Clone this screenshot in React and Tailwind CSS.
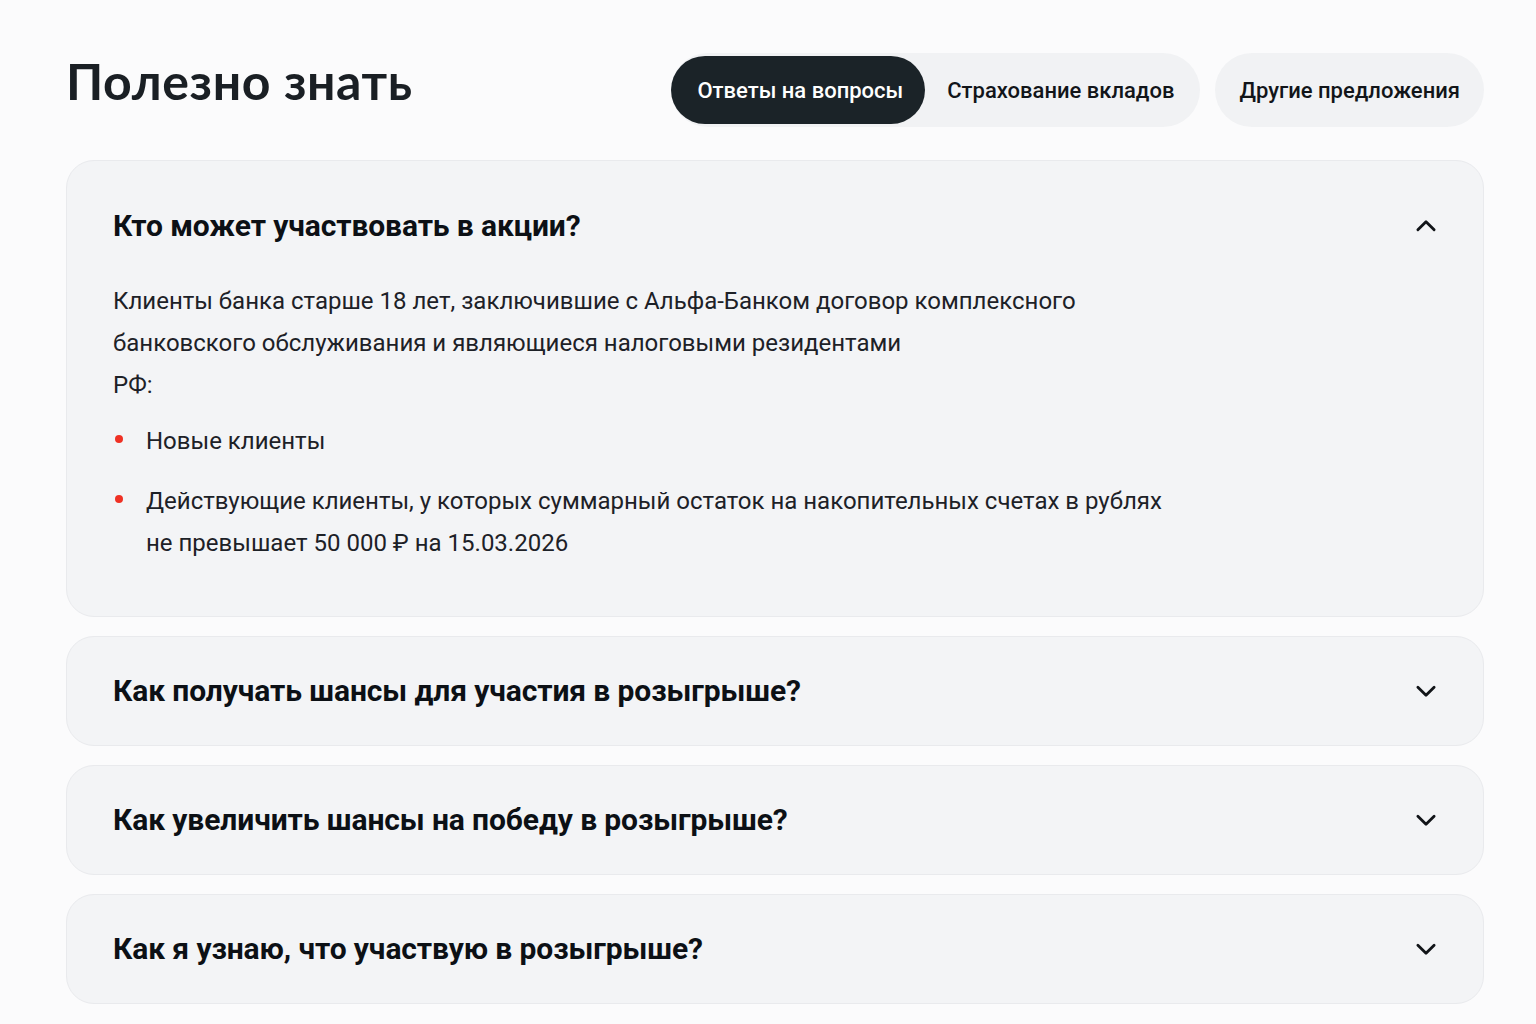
import React from "react";

const Chevron = ({ up }) => (
  <svg width="26" height="26" viewBox="0 0 24 24" fill="none" stroke="#111418" strokeWidth="2.6" strokeLinecap="round" strokeLinejoin="round">
    {up ? <path d="M4.5 15.5 12 8l7.5 7.5" /> : <path d="M4.5 8.5 12 16l7.5-7.5" />}
  </svg>
);

const Q = ({ children }) => (
  <div className="text-[30px] leading-[36px] font-bold text-[#0c1015] tracking-[-0.1px]">{children}</div>
);

const Collapsed = ({ title }) => (
  <div className="rounded-[28px] bg-[#f3f4f6] border border-[#e9eaed] pl-[46px] pr-[44px] h-[110px] flex items-center justify-between">
    <Q>{title}</Q>
    <Chevron />
  </div>
);

export default function App() {
  return (
    <div className="min-h-[1024px] bg-[#fbfbfc] pl-[66px] pr-[52px] pt-[50px]" style={{ fontFamily: "Roboto, 'Noto Sans', sans-serif" }}>
      <div className="flex items-center justify-between h-[80px]">
        <h1 className="text-[50px] leading-[60px] font-bold text-[#1a1f24] tracking-[0.6px] -mt-[18px]" style={{ fontFamily: "Lato, 'Noto Sans', sans-serif" }}>
          Полезно знать
        </h1>
        <div className="flex items-center gap-[15px]">
          <div className="flex items-center bg-[#f1f2f4] rounded-full h-[74px]">
            <div className="h-[68px] pl-[26px] pr-[22px] rounded-full bg-[#1b2328] text-white text-[22px] font-medium flex items-center">
              Ответы на вопросы
            </div>
            <div className="h-[68px] pl-[22px] pr-[26px] text-[22px] font-medium text-[#121519] flex items-center">
              Страхование вкладов
            </div>
          </div>
          <div className="h-[74px] px-[24px] rounded-full bg-[#f1f2f4] text-[22px] font-medium text-[#121519] flex items-center">
            Другие предложения
          </div>
        </div>
      </div>

      <div className="mt-[30px] flex flex-col gap-[19px]">
        <div className="rounded-[28px] bg-[#f3f4f6] border border-[#e9eaed] pl-[46px] pr-[44px] pt-[47px] pb-[52px]">
          <div className="flex items-center justify-between">
            <Q>Кто может участвовать в акции?</Q>
            <Chevron up />
          </div>
          <div className="mt-[36px] text-[24px] leading-[42px] text-[#1d2127]">
            <p>
              Клиенты банка старше 18 лет, заключившие с Альфа-Банком договор комплексного
              <br />
              банковского обслуживания и являющиеся налоговыми резидентами
              <br />
              РФ:
            </p>
            <ul className="mt-[14px] flex flex-col gap-[18px]">
              <li className="flex">
                <span className="w-[33px] shrink-0 flex items-start pt-[15px] pl-[2px]">
                  <span className="w-[8px] h-[8px] rounded-full bg-[#ef3124]" />
                </span>
                <span>Новые клиенты</span>
              </li>
              <li className="flex">
                <span className="w-[33px] shrink-0 flex items-start pt-[15px] pl-[2px]">
                  <span className="w-[8px] h-[8px] rounded-full bg-[#ef3124]" />
                </span>
                <span>
                  Действующие клиенты, у которых суммарный остаток на накопительных счетах в рублях
                  <br />
                  не превышает 50 000 ₽ на 15.03.2026
                </span>
              </li>
            </ul>
          </div>
        </div>
        <Collapsed title="Как получать шансы для участия в розыгрыше?" />
        <Collapsed title="Как увеличить шансы на победу в розыгрыше?" />
        <Collapsed title="Как я узнаю, что участвую в розыгрыше?" />
      </div>
    </div>
  );
}
